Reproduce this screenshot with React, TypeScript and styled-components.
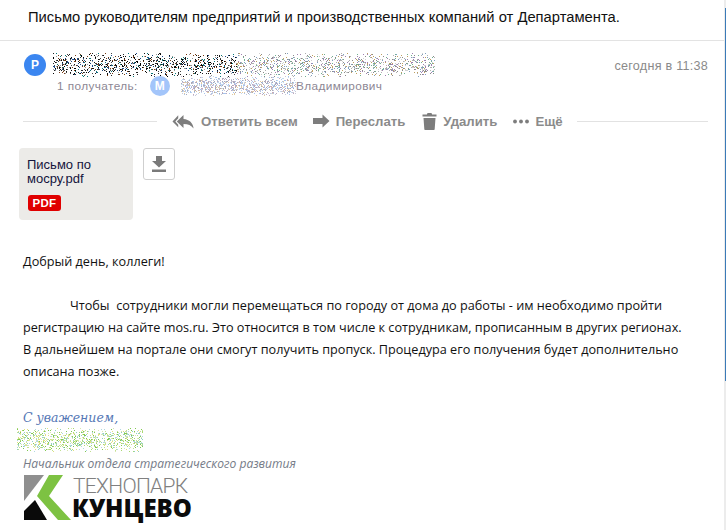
import { useMemo } from "react";
import styled, { createGlobalStyle } from "styled-components";

const GlobalStyle = createGlobalStyle`
  html, body {
    margin: 0;
    padding: 0;
    background: #fff;
    overflow: hidden;
  }
`;

const Page = styled.div`
  width: 726px;
  height: 530px;
  display: flex;
  overflow: hidden;
  background: #fff;
  font-family: "Liberation Sans", Arial, sans-serif;
`;

const Content = styled.div`
  flex: 1;
  min-width: 0;
`;

const ScrollRail = styled.div`
  width: 2px;
  padding-top: 8px;
  background: #ececec;
`;

const ScrollThumb = styled.div`
  height: 373px;
  margin-left: 1px;
  background: #3a7ab8;
`;

const Subject = styled.div`
  height: 41px;
  box-sizing: border-box;
  padding: 8px 0 0 28px;
  border-bottom: 1px solid #e3e3e3;
  font-size: 14.75px;
  line-height: 18px;
  color: #111;
`;

const Header = styled.div`
  display: grid;
  grid-template-columns: 22px 1fr auto;
  column-gap: 7px;
  padding: 13px 16px 0 24px;
`;

const Avatar = styled.div<{ $bg: string; $size: number }>`
  width: ${(p) => p.$size}px;
  height: ${(p) => p.$size}px;
  border-radius: 50%;
  background: ${(p) => p.$bg};
  color: #fff;
  font-size: 12px;
  font-weight: 700;
  display: flex;
  align-items: center;
  justify-content: center;
  flex: none;
`;

const SenderNoise = styled.div`
  height: 24px;
  margin-top: -1px;
`;

const Time = styled.div`
  font-size: 12.6px;
  line-height: 15px;
  color: #8a8a8a;
  padding-top: 5px;
  letter-spacing: 0.25px;
`;

const RecipientRow = styled.div`
  display: flex;
  align-items: center;
  height: 20px;
  margin: -1px 0 0 57px;
  font-size: 11.8px;
  letter-spacing: 0.4px;
  color: #8d8794;
`;

const RecipientLabel = styled.span`
  width: 93px;
`;

const RecipientName = styled.span`
  display: flex;
  align-items: center;
  margin-left: 11px;
`;

const Actions = styled.div`
  display: flex;
  align-items: center;
  height: 20px;
  margin: 15px 16px 0 23px;
`;

const LeadRule = styled.div`
  width: 134px;
  height: 1px;
  background: #e2e2e2;
`;

const TailRule = styled.div`
  flex: 1;
  height: 1px;
  margin-left: 14px;
  background: #e2e2e2;
`;

const Action = styled.div<{ $left: number }>`
  display: flex;
  align-items: center;
  margin-left: ${(p) => p.$left}px;
  font-size: 13.2px;
  font-weight: 700;
  color: #8b8b8b;
  white-space: nowrap;
`;

const ActionIcon = styled.svg`
  fill: #7d7d7d;
  margin-right: 6px;
  flex: none;
`;

const AttachRow = styled.div`
  display: flex;
  align-items: flex-start;
  gap: 10px;
  margin: 17px 0 0 19px;
`;

const AttachCard = styled.div`
  width: 114px;
  height: 72px;
  box-sizing: border-box;
  padding: 10px 8px 0;
  border-radius: 4px;
  background: #ecebe8;
  color: #14143c;
  font-size: 13px;
  line-height: 14px;
`;

const PdfBadge = styled.div`
  width: 33px;
  height: 16px;
  margin: 9px 0 0 1px;
  border-radius: 3px;
  background: #e00000;
  color: #fff;
  font-size: 11.5px;
  font-weight: 700;
  letter-spacing: 0.3px;
  line-height: 16px;
  text-align: center;
`;

const DownloadButton = styled.div`
  width: 32px;
  height: 32px;
  box-sizing: border-box;
  border: 1px solid #cfcfcf;
  border-radius: 3px;
  display: flex;
  align-items: center;
  justify-content: center;
`;

const Body = styled.div`
  margin: 30px 0 0 23px;
  font-family: "Open Sans", sans-serif;
  font-size: 12.66px;
  line-height: 22px;
  color: #111;
`;

const Para = styled.div<{ $gap?: number }>`
  margin-top: ${(p) => p.$gap ?? 0}px;
  white-space: pre;
`;

const Indented = styled(Para)`
  padding-left: 47px;
`;

const Signature = styled.div`
  margin: 28px 0 0 23px;
  font-family: "DejaVu Serif", serif;
  font-style: italic;
  font-size: 12.5px;
  line-height: 16px;
  color: #5577b5;
`;

const SignNoise = styled.div`
  height: 24px;
  margin: 2px 0 0 17px;
`;

const JobTitle = styled.div`
  margin: 5px 0 0 23px;
  font-family: "Open Sans", sans-serif;
  font-style: italic;
  font-size: 12.1px;
  line-height: 14px;
  color: #767c88;
`;

const Logo = styled.div`
  display: grid;
  grid-template-columns: 48px auto;
  margin: 4px 0 0 24px;
  height: 46px;
`;

const LogoText = styled.div`
  display: flex;
  flex-direction: column;
`;

const LogoTop = styled.span`
  font-family: "Roboto", sans-serif;
  font-weight: 300;
  font-size: 21px;
  line-height: 22px;
  margin-left: 1px;
  color: #808080;
  letter-spacing: -0.7px;
`;

const LogoBottom = styled.span`
  font-family: "Open Sans", sans-serif;
  font-weight: 800;
  font-size: 24px;
  line-height: 22px;
  color: #0c0c0c;
`;

// redacted text in the screenshot: a field of coloured specks
function Noise({ width, height, colors, density, seed }: { width: number; height: number; colors: (x: number) => string[]; density: number; seed: number }) {
  const dots = useMemo(() => {
    let s = seed;
    const rnd = () => {
      s = (s * 16807) % 2147483647;
      return s / 2147483647;
    };
    const out: { x: number; y: number; c: string }[] = [];
    for (let y = 0; y < height; y++) {
      const edge = Math.sin((y / (height - 1)) * Math.PI);
      for (let x = 0; x < width; x++) {
        if (rnd() < density * (0.2 + edge)) {
          const pal = colors(x / width);
          out.push({ x, y, c: pal[Math.floor(rnd() * pal.length)] });
        }
      }
    }
    return out;
  }, [width, height, density, seed]);
  return (
    <svg width={width} height={height} style={{ display: "block" }}>
      {dots.map((d, i) => (
        <rect key={i} x={d.x} y={d.y} width={1} height={1} fill={d.c} />
      ))}
    </svg>
  );
}

const senderColors = (t: number) =>
  t < 0.48
    ? ["#111", "#222", "#000", "#444", "#1a4a8a", "#7a3b10", "#0a7a7a", "#999"]
    : ["#8a8a8a", "#a080b0", "#70b090", "#c0a060", "#80a0c0", "#b0b0b0", "#d0d0d0"];
const recipientColors = () => ["#c8c8d8", "#a8c4ec", "#e0c8a0", "#a8a8b8", "#c0d8f0", "#c0a8c0"];
const signColors = () => ["#a8d870", "#c0e090", "#90d0c0", "#e0e080", "#80c850", "#b0d8e0", "#d8e8b0"];

function ReplyAllIcon() {
  return (
    <ActionIcon width="23" height="15" viewBox="0 0 24 15">
      <path d="M6.500 1 0.500 7.500l6 6V11L3.500 7.500 6.500 4z" />
      <path d="M12 .8 5 7.500l7 6.700V10c5 0 8 1.300 10.500 4.700C22 9 18 5.200 12 4.800z" />
    </ActionIcon>
  );
}

function ForwardIcon() {
  return (
    <ActionIcon width="17" height="14" viewBox="0 0 17 14">
      <path d="M0 4h9.500V0.500L16.500 7l-7 6.500V10H0z" />
    </ActionIcon>
  );
}

function TrashIcon() {
  return (
    <ActionIcon width="15" height="17" viewBox="0 0 14 17">
      <path d="M5 0h4l.6 1.600H14v2H0v-2h4.400zM1 5h12l-.8 11c0 .6-.5 1-1 1H2.800c-.5 0-1-.4-1-1z" />
    </ActionIcon>
  );
}

function DotsIcon() {
  return (
    <ActionIcon width="16" height="5" viewBox="0 0 16 5">
      <circle cx="2" cy="2.500" r="1.900" />
      <circle cx="8" cy="2.500" r="1.900" />
      <circle cx="14" cy="2.500" r="1.900" />
    </ActionIcon>
  );
}

function DownloadIcon() {
  return (
    <svg width="14" height="16" viewBox="0 0 14 16" fill="#7a7a7a">
      <path d="M4 0h6v5h4L7 11.500 0 5h4z" />
      <rect x="0" y="13.500" width="14" height="2.500" />
    </svg>
  );
}

function KLogo() {
  return (
    <svg width="48" height="46" viewBox="0 0 48 46">
      <path d="M0 0h20L0 26z" fill="#8f8f8f" />
      <path d="M25 0h14L25 21l22 24H34L13 21z" fill="#7dc242" />
      <path d="M0 45V36L11 25 23 45z" fill="#0a0a0a" />
    </svg>
  );
}

export default function App() {
  return (
    <Page>
      <GlobalStyle />
      <Content>
        <Subject>Письмо руководителям предприятий и производственных компаний от Департамента.</Subject>
        <Header>
          <Avatar $bg="#3b86f0" $size={22}>Р</Avatar>
          <SenderNoise>
            <Noise width={382} height={24} colors={senderColors} density={0.26} seed={77} />
          </SenderNoise>
          <Time>сегодня в 11:38</Time>
        </Header>
        <RecipientRow>
          <RecipientLabel>1 получатель:</RecipientLabel>
          <Avatar $bg="#a3c5fa" $size={20}>М</Avatar>
          <RecipientName>
            <Noise width={115} height={20} colors={recipientColors} density={0.42} seed={311} />
            Владимирович
          </RecipientName>
        </RecipientRow>
        <Actions>
          <LeadRule />
          <Action $left={15}><ReplyAllIcon />Ответить всем</Action>
          <Action $left={15}><ForwardIcon />Переслать</Action>
          <Action $left={17}><TrashIcon />Удалить</Action>
          <Action $left={16}><DotsIcon />Ещё</Action>
          <TailRule />
        </Actions>
        <AttachRow>
          <AttachCard>
            Письмо по<br />мосру.pdf
            <PdfBadge>PDF</PdfBadge>
          </AttachCard>
          <DownloadButton>
            <DownloadIcon />
          </DownloadButton>
        </AttachRow>
        <Body>
          <Para>Добрый день, коллеги!</Para>
          <Indented $gap={22}>Чтобы  сотрудники могли перемещаться по городу от дома до работы - им необходимо пройти</Indented>
          <Para>регистрацию на сайте mos.ru. Это относится в том числе к сотрудникам, прописанным в других регионах.</Para>
          <Para>В дальнейшем на портале они смогут получить пропуск. Процедура его получения будет дополнительно</Para>
          <Para>описана позже.</Para>
        </Body>
        <Signature>С уважением,</Signature>
        <SignNoise>
          <Noise width={126} height={24} colors={signColors} density={0.33} seed={5003} />
        </SignNoise>
        <JobTitle>Начальник отдела стратегического развития</JobTitle>
        <Logo>
          <KLogo />
          <LogoText>
            <LogoTop>ТЕХНОПАРК</LogoTop>
            <LogoBottom>КУНЦЕВО</LogoBottom>
          </LogoText>
        </Logo>
      </Content>
      <ScrollRail>
        <ScrollThumb />
      </ScrollRail>
    </Page>
  );
}
